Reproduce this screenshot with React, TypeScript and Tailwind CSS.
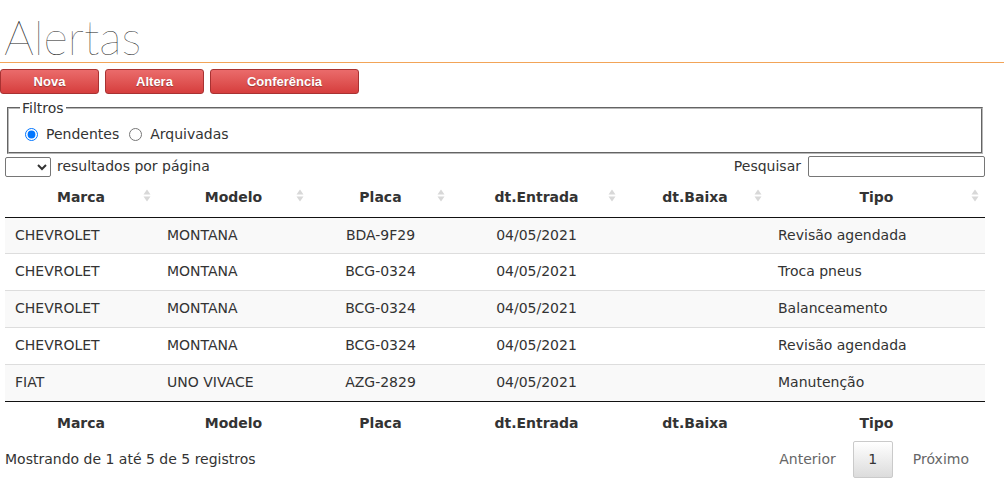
import React from "react";

type Row = {
  marca: string;
  modelo: string;
  placa: string;
  entrada: string;
  baixa: string;
  tipo: string;
};

const rows: Row[] = [
  { marca: "CHEVROLET", modelo: "MONTANA", placa: "BDA-9F29", entrada: "04/05/2021", baixa: "", tipo: "Revisão agendada" },
  { marca: "CHEVROLET", modelo: "MONTANA", placa: "BCG-0324", entrada: "04/05/2021", baixa: "", tipo: "Troca pneus" },
  { marca: "CHEVROLET", modelo: "MONTANA", placa: "BCG-0324", entrada: "04/05/2021", baixa: "", tipo: "Balanceamento" },
  { marca: "CHEVROLET", modelo: "MONTANA", placa: "BCG-0324", entrada: "04/05/2021", baixa: "", tipo: "Revisão agendada" },
  { marca: "FIAT", modelo: "UNO VIVACE", placa: "AZG-2829", entrada: "04/05/2021", baixa: "", tipo: "Manutenção" },
];

const columns = [
  { label: "Marca", width: "w-[152px]" },
  { label: "Modelo", width: "w-[153px]" },
  { label: "Placa", width: "w-[141px]" },
  { label: "dt.Entrada", width: "w-[171px]" },
  { label: "dt.Baixa", width: "w-[146px]" },
  { label: "Tipo", width: "w-[217px]" },
];

function SortIcon() {
  return (
    <svg width="8" height="13" viewBox="0 0 8 13" className="absolute right-[6px] top-[10px]" aria-hidden>
      <path d="M4 0.5 L7.5 5.5 L0.5 5.5 Z" fill="#d8d8d8" />
      <path d="M4 12.5 L7.5 7.5 L0.5 7.5 Z" fill="#d8d8d8" />
    </svg>
  );
}

function RedButton({ label, width }: { label: string; width: string }) {
  return (
    <button
      className={`${width} h-[25px] rounded-[3px] border border-[#a83232] bg-gradient-to-b from-[#ea6b6b] to-[#d63d3d] text-[13px] font-bold text-white [text-shadow:0_1px_1px_rgba(0,0,0,0.3)] [font-family:'Liberation_Sans',Arial,sans-serif]`}
    >
      {label}
    </button>
  );
}

export default function App() {
  return (
    <div className="w-[1004px] h-[484px] overflow-hidden bg-white text-[14px] text-[#333] [font-family:'DejaVu_Sans',Verdana,sans-serif]">
      <div className="h-[63px] border-b border-[#f2a458] pl-[4px] pt-[14px]">
        <h1 className="text-[47px] leading-[46px] font-thin text-[#222] [font-family:Lato,Roboto,sans-serif]">Alertas</h1>
      </div>

      <div className="mt-[6px] flex gap-[6px]">
        <RedButton label="Nova" width="w-[99px]" />
        <RedButton label="Altera" width="w-[99px]" />
        <RedButton label="Conferência" width="w-[149px]" />
      </div>

      <fieldset className="mx-[7px] mt-[6px] w-[976px] h-[54px] border-2 border-[#b8b8b8] [border-style:groove]">
        <legend className="ml-[11px] px-[2px] leading-[16px] text-[14px]">Filtros</legend>
        <div className="mt-[8px] flex items-center pl-[16px]">
          <input type="radio" name="f" defaultChecked className="h-[13px] w-[13px]" />
          <label className="ml-[8px] mr-[10px]">Pendentes</label>
          <input type="radio" name="f" className="h-[13px] w-[13px]" />
          <label className="ml-[8px]">Arquivadas</label>
        </div>
      </fieldset>

      <div className="mt-[2px] flex h-[21px] items-center justify-between pl-[5px] pr-[19px]">
        <div className="flex items-center">
          <select className="h-[20px] w-[46px] rounded-[2px] border border-[#767676] bg-white text-[13px]">
            <option value=""></option>
          </select>
          <span className="ml-[6px]">resultados por página</span>
        </div>
        <div className="flex items-center">
          <span className="mr-[7px]">Pesquisar</span>
          <input type="text" className="h-[21px] w-[177px] rounded-[2px] border border-[#767676] bg-white" />
        </div>
      </div>

      <table className="ml-[5px] mt-[2px] w-[980px] border-collapse table-fixed">
        <thead>
          <tr className="h-[38px] border-b border-[#111]">
            {columns.map((c) => (
              <th key={c.label} className={`${c.width} relative px-[10px] text-center font-bold`}>
                {c.label}
                <SortIcon />
              </th>
            ))}
          </tr>
        </thead>
        <tbody>
          {rows.map((r, i) => (
            <tr
              key={i}
              className={`${i === 0 ? "h-[36px]" : "h-[37px] border-t border-[#ddd]"} ${i % 2 === 0 ? "bg-[#f9f9f9]" : "bg-white"}`}
            >
              <td className="px-[10px]">{r.marca}</td>
              <td className="px-[10px]">{r.modelo}</td>
              <td className="px-[10px] text-center">{r.placa}</td>
              <td className="px-[10px] text-center">{r.entrada}</td>
              <td className="px-[10px] text-center">{r.baixa}</td>
              <td className="px-[10px]">{r.tipo}</td>
            </tr>
          ))}
        </tbody>
        <tfoot>
          <tr className="h-[40px] border-t border-[#111]">
            {columns.map((c) => (
              <th key={c.label} className="px-[10px] pt-[4px] text-center font-bold">
                {c.label}
              </th>
            ))}
          </tr>
        </tfoot>
      </table>

      <div className="flex h-[37px] items-center justify-between pl-[5px] pr-[35px]">
        <span>Mostrando de 1 até 5 de 5 registros</span>
        <div className="flex items-center">
          <span className="mr-[17px] text-[#666]">Anterior</span>
          <span className="flex h-[37px] w-[40px] items-center justify-center rounded-[2px] border border-[#cacaca] bg-gradient-to-b from-white to-[#dcdcdc] text-[#333]">
            1
          </span>
          <span className="ml-[20px] text-[#666]">Próximo</span>
        </div>
      </div>
    </div>
  );
}
